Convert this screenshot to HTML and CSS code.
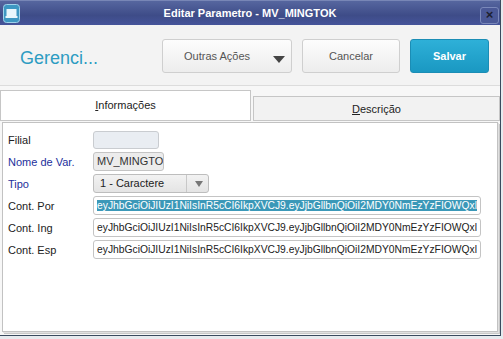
FILE: index.html
```html
<!DOCTYPE html>
<html>
	<head>
		<title>Editar Parametro - MV_MINGTOK</title>
		<link rel="stylesheet" href="styles.css">
	</head>
	<body>
		<div class="window">
			<div class="titlebar">
				<span class="appIcon">
					<svg width="17" height="19" viewBox="0 0 17 19">
						<rect x="0.5" y="0.5" width="16" height="18" rx="3" fill="#3d97c2" stroke="#9fd2ea"/>
						<rect x="3.5" y="5" width="10" height="7" fill="#e8f6fc"/>
						<rect x="2.5" y="12" width="12" height="2" fill="#e8f6fc"/>
					</svg>
				</span>
				<span class="title">Editar Parametro - MV_MINGTOK</span>
				<span class="closeBtn">&#215;</span>
			</div>
			<div class="header">
				<h1 class="heading">Gerenci...</h1>
				<div class="actions">
					<button class="btn btnMenu">Outras Ações<span class="caret"></span></button>
					<button class="btn btnCancel">Cancelar</button>
					<button class="btn btnPrimary">Salvar</button>
				</div>
			</div>
			<div class="tabs">
				<div class="tab active"><u>I</u>nformações</div>
				<div class="tab"><u>D</u>escrição</div>
			</div>
			<div class="panel">
				<div class="form">
					<span class="label">Filial</span>
					<div class="field fieldFilial"></div>

					<span class="label required">Nome de Var.</span>
					<div class="field fieldName">MV_MINGTOK</div>

					<span class="label required">Tipo</span>
					<div class="field select">
						<span class="selectText">1 - Caractere</span>
						<span class="selectArrow"></span>
					</div>

					<span class="label">Cont. Por</span>
					<div class="field wide"><span class="selected">eyJhbGciOiJIUzI1NiIsInR5cCI6IkpXVCJ9.eyJjbGllbnQiOiI2MDY0NmEzYzFIOWQxl</span></div>

					<span class="label">Cont. Ing</span>
					<div class="field wide">eyJhbGciOiJIUzI1NiIsInR5cCI6IkpXVCJ9.eyJjbGllbnQiOiI2MDY0NmEzYzFIOWQxl</div>

					<span class="label">Cont. Esp</span>
					<div class="field wide">eyJhbGciOiJIUzI1NiIsInR5cCI6IkpXVCJ9.eyJjbGllbnQiOiI2MDY0NmEzYzFIOWQxl</div>
				</div>
			</div>
		</div>
	</body>
</html>
```

FILE: styles.css
```css
* {box-sizing: border-box; font-family: "Liberation Sans", Arial, sans-serif;}
body {margin: 0; background: #e6eaee;}

.window {
	width: 501px;
	height: 336px;
	background: #f7f7f7;
	border-right: 1px solid #3a4a5e;
	border-bottom: 1px solid #3a4a5e;
}

/* title bar */
.titlebar {
	height: 25px;
	display: flex;
	align-items: center;
	padding: 0 1px 0 3px;
	background: linear-gradient(#56669f, #3e4c88 60%, #45549a);
	border-top: 1px solid #7886b6;
}
.appIcon {display: flex; width: 17px; height: 19px;}
.title {
	flex: 1;
	text-align: center;
	color: #fff;
	font-size: 11px;
	font-weight: bold;
}
.closeBtn {
	width: 19px;
	height: 17px;
	margin-top: 4px;
	border: 1px solid #7a88ba;
	border-radius: 3px;
	background: #4a5896;
	color: #1c2030;
	font-size: 13px;
	font-weight: bold;
	line-height: 14px;
	text-align: center;
}

/* header */
.header {
	height: 61px;
	display: flex;
	align-items: flex-start;
	justify-content: space-between;
	padding: 14px 11px 0 20px;
	background: #f3f3f3;
	border-bottom: 1px solid #dcdcdc;
}
.heading {
	margin: 9px 0 0;
	font-size: 18px;
	font-weight: normal;
	color: #2d9cc2;
}
.actions {display: flex; gap: 10px;}
.btn {
	height: 34px;
	border: 1px solid #cfcfcf;
	border-radius: 3px;
	background: linear-gradient(#fdfdfd, #ededed);
	color: #555;
	font-size: 11px;
	padding: 0;
}
.btnMenu {
	width: 130px;
	display: flex;
	align-items: center;
	padding: 0 4px 0 21px;
}
.caret {
	margin: 6px 0 0 23px;
	width: 0;
	height: 0;
	border-left: 6px solid transparent;
	border-right: 6px solid transparent;
	border-top: 7px solid #454545;
}
.btnCancel {width: 98px;}
.btnPrimary {
	width: 79px;
	border-color: #1b8db5;
	background: linear-gradient(#2eb0d8, #1a98c2);
	color: #fff;
	font-weight: bold;
}

/* tabs */
.tabs {
	height: 36px;
	display: flex;
	align-items: flex-end;
	gap: 2px;
	padding: 4px 0 1px;
}
.tab {
	height: 25px;
	width: 247px;
	display: flex;
	align-items: center;
	justify-content: center;
	border: 1px solid #c6c6c6;
	background: #f2f2f2;
	color: #222;
	font-size: 11px;
}
.tab.active {
	width: 251px;
	height: 31px;
	background: #fff;
	padding-bottom: 1px;
}
.tab u {text-decoration-thickness: 1px;}

/* panel */
.panel {
	height: 210px;
	margin: 0 2px 0 2px;
	background: #fff;
	border: 1px solid #c2c2c2;
	box-shadow: 1px 1px 0 #e0e0e0, 2px 2px 0 #c8c8c8;
	padding: 7px 0 0 5px;
}
.form {
	display: grid;
	grid-template-columns: 85px auto;
	grid-auto-rows: 19px;
	row-gap: 3px;
	justify-items: start;
	align-items: center;
}
.label {font-size: 11px; color: #222;}
.label.required {color: #23309c;}

.field {
	height: 19px;
	border: 1px solid #c4c4c4;
	border-radius: 3px;
	background: #fff;
	padding: 0 3px;
	font-size: 11px;
	line-height: 17px;
	color: #222;
	white-space: nowrap;
	overflow: hidden;
}
.fieldFilial {width: 66px; height: 18px; background: #e9edf2; border-color: #c9ccd0;}
.fieldName {width: 71px; background: #ececec; color: #333;}
.select {
	width: 116px;
	display: flex;
	padding: 0;
	background: linear-gradient(#f2f2f2, #e4e4e4);
	border-color: #bdbdbd;
}
.selectText {width: 93px; padding-left: 6px; border-right: 1px solid #c8c8c8;}
.selectArrow {
	margin: 6px 0 0 8px;
	width: 0;
	height: 0;
	border-left: 4px solid transparent;
	border-right: 4px solid transparent;
	border-top: 6px solid #777;
}
.wide {width: 388px; font-size: 10.3px;}
.selected {background: #3b98b8; color: #fff;}
```
